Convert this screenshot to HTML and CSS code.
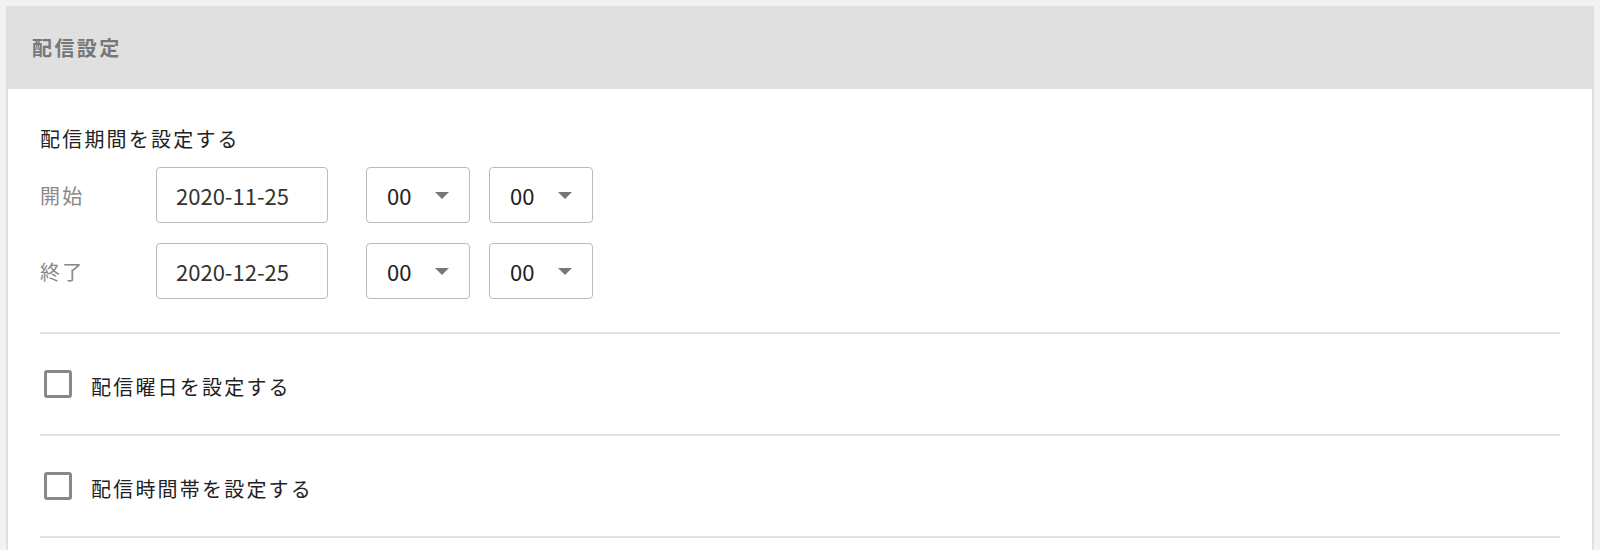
FILE: index.html
```html
<!DOCTYPE html>
<html lang="ja">
<head>
<meta charset="utf-8">
<title>配信設定</title>
<link rel="stylesheet" href="styles.css">
</head>
<body>
<div class="card">
  <div class="card-header">配信設定</div>
  <div class="card-body">
    <section class="section period">
      <div class="section-title">配信期間を設定する</div>
      <div class="row">
        <div class="row-label">開始</div>
        <div class="input date">2020-11-25</div>
        <div class="select sel-hour"><span>00</span><i class="caret"></i></div>
        <div class="select sel-min"><span>00</span><i class="caret"></i></div>
      </div>
      <div class="row">
        <div class="row-label">終了</div>
        <div class="input date">2020-12-25</div>
        <div class="select sel-hour"><span>00</span><i class="caret"></i></div>
        <div class="select sel-min"><span>00</span><i class="caret"></i></div>
      </div>
    </section>
    <section class="section check-row">
      <span class="checkbox"></span>
      <span class="check-label">配信曜日を設定する</span>
    </section>
    <section class="section check-row">
      <span class="checkbox"></span>
      <span class="check-label">配信時間帯を設定する</span>
    </section>
  </div>
</div>
</body>
</html>
```
FILE: styles.css
```css
* { box-sizing: border-box; }
html, body { margin: 0; padding: 0; }
body {
  background: #f2f2f2;
  font-family: "Noto Sans CJK JP", "Noto Sans", sans-serif;
  color: #222;
  padding: 6px 6px 0 6px;
  overflow: hidden;
}
.card {
  background: #fff;
  border-left: 2px solid #e0e0e0;
  border-right: 2px solid #e0e0e0;
  height: 544px;
}
.card-header {
  background: #e0e0e0;
  height: 83px;
  margin: 0 -2px;
  padding-left: 26px;
  display: flex;
  align-items: center;
  font-size: 20px;
  font-weight: 700;
  letter-spacing: 2.4px;
  color: #777;
}
.card-body {
  padding: 0 32px 0 32px;
}
.section {
  border-bottom: 2px solid #e0e0e0;
}
.period {
  padding: 35px 0 33px 0;
}
.section-title {
  font-size: 20px;
  line-height: 30px;
  letter-spacing: 2.2px;
  color: #222;
  margin-bottom: 13px;
}
.row {
  display: flex;
  align-items: center;
  height: 56px;
}
.row + .row { margin-top: 20px; }
.row-label {
  width: 116px;
  font-size: 20px;
  letter-spacing: 2.2px;
  color: #888;
}
.input, .select {
  height: 56px;
  border: 1px solid #bbb;
  border-radius: 4px;
  display: flex;
  align-items: center;
  font-size: 22px;
  color: #333;
  background: #fff;
}
.date {
  width: 172px;
  padding-left: 19px;
}
.select {
  width: 104px;
  padding-left: 20px;
  padding-right: 20px;
  justify-content: space-between;
  color: #222;
}
.sel-hour { margin-left: 38px; }
.sel-min { margin-left: 19px; }
.caret {
  width: 0;
  height: 0;
  border-left: 7px solid transparent;
  border-right: 7px solid transparent;
  border-top: 7px solid #777;
}
.check-row {
  height: 102px;
  display: flex;
  align-items: center;
  padding-left: 4px;
}
.checkbox {
  width: 28px;
  height: 28px;
  border: 3px solid #888;
  border-radius: 3px;
  margin-right: 19px;
  flex: none;
}
.check-label {
  font-size: 20px;
  letter-spacing: 2.2px;
  color: #222;
  position: relative;
  top: 2px;
}
```
